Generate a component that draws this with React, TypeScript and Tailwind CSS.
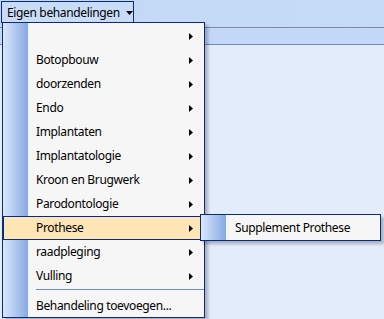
const items = [
    "",
    "Botopbouw",
    "doorzenden",
    "Endo",
    "Implantaten",
    "Implantatologie",
    "Kroon en Brugwerk",
    "Parodontologie",
    "Prothese",
    "raadpleging",
    "Vulling",
];

function Arrow() {
    return (
        <svg width="4" height="7" viewBox="0 0 4 7" className="shrink-0">
            <path d="M0 0 L4 3.5 L0 7 Z" fill="#000" />
        </svg>
    );
}

function MenuItem({ label, active }: { label: string; active?: boolean }) {
    return (
        <div
            className={
                active
                    ? "flex h-[24px] items-center border border-[#0a2a80] bg-[#fee5b6] pl-[32px] pr-[10px]"
                    : "flex h-[24px] items-center border border-transparent pl-[32px] pr-[10px]"
            }
        >
            <span className="flex-1">{label}</span>
            <Arrow />
        </div>
    );
}

export default function App() {
    return (
        <div
            className="relative h-[319px] w-[384px] overflow-hidden bg-[#e3ecfa] text-[12px] leading-[16px] tracking-[-0.35px] text-black"
            style={{ fontFamily: "'Noto Sans', 'DejaVu Sans', sans-serif" }}
        >
            <div className="h-[27px] bg-gradient-to-r from-[#c2d8f6] to-[#c6dbf7]" />
            <div className="h-[18px] border-y border-[#7a8ca6] bg-[#c3d9f7]" />

            <div className="absolute left-[1px] top-[1px] flex h-[22px] w-[133px] items-center gap-[6px] whitespace-nowrap border-x border-t border-[#0a2a80] bg-[#c9dcf5] pl-[5px]">
                <span>Eigen behandelingen</span>
                <svg width="7" height="4" viewBox="0 0 7 4">
                    <path d="M0 0 L7 0 L3.5 4 Z" fill="#000" />
                </svg>
            </div>

            <div className="absolute left-[2px] top-[22px] flex h-[296px] w-[203px] border border-[#0a2a80] bg-[#f6f6f6] shadow-[3px_3px_3px_rgba(0,0,0,0.25)]">
                <div className="absolute bottom-0 left-0 top-0 w-[25px] bg-gradient-to-r from-[#dae7fb] to-[#87a9e2]" />
                <div className="relative flex w-full flex-col pt-[1px]">
                    {items.map((label) => (
                        <MenuItem key={label} label={label} active={label === "Prothese"} />
                    ))}
                    <div className="ml-[33px] mt-[1px] h-[1px] bg-[#6a8ad8]" />
                    <div className="whitespace-nowrap pl-[33px] pt-[8px]">Behandeling toevoegen...</div>
                </div>
            </div>

            <div className="absolute left-[200px] top-[214px] flex h-[27px] w-[181px] items-center border border-[#0a2a80] bg-[#f6f6f6] shadow-[3px_3px_3px_rgba(0,0,0,0.25)]">
                <div className="h-full w-[25px] bg-gradient-to-r from-[#dae7fb] to-[#87a9e2]" />
                <span className="whitespace-nowrap pl-[9px]">Supplement Prothese</span>
            </div>
        </div>
    );
}
